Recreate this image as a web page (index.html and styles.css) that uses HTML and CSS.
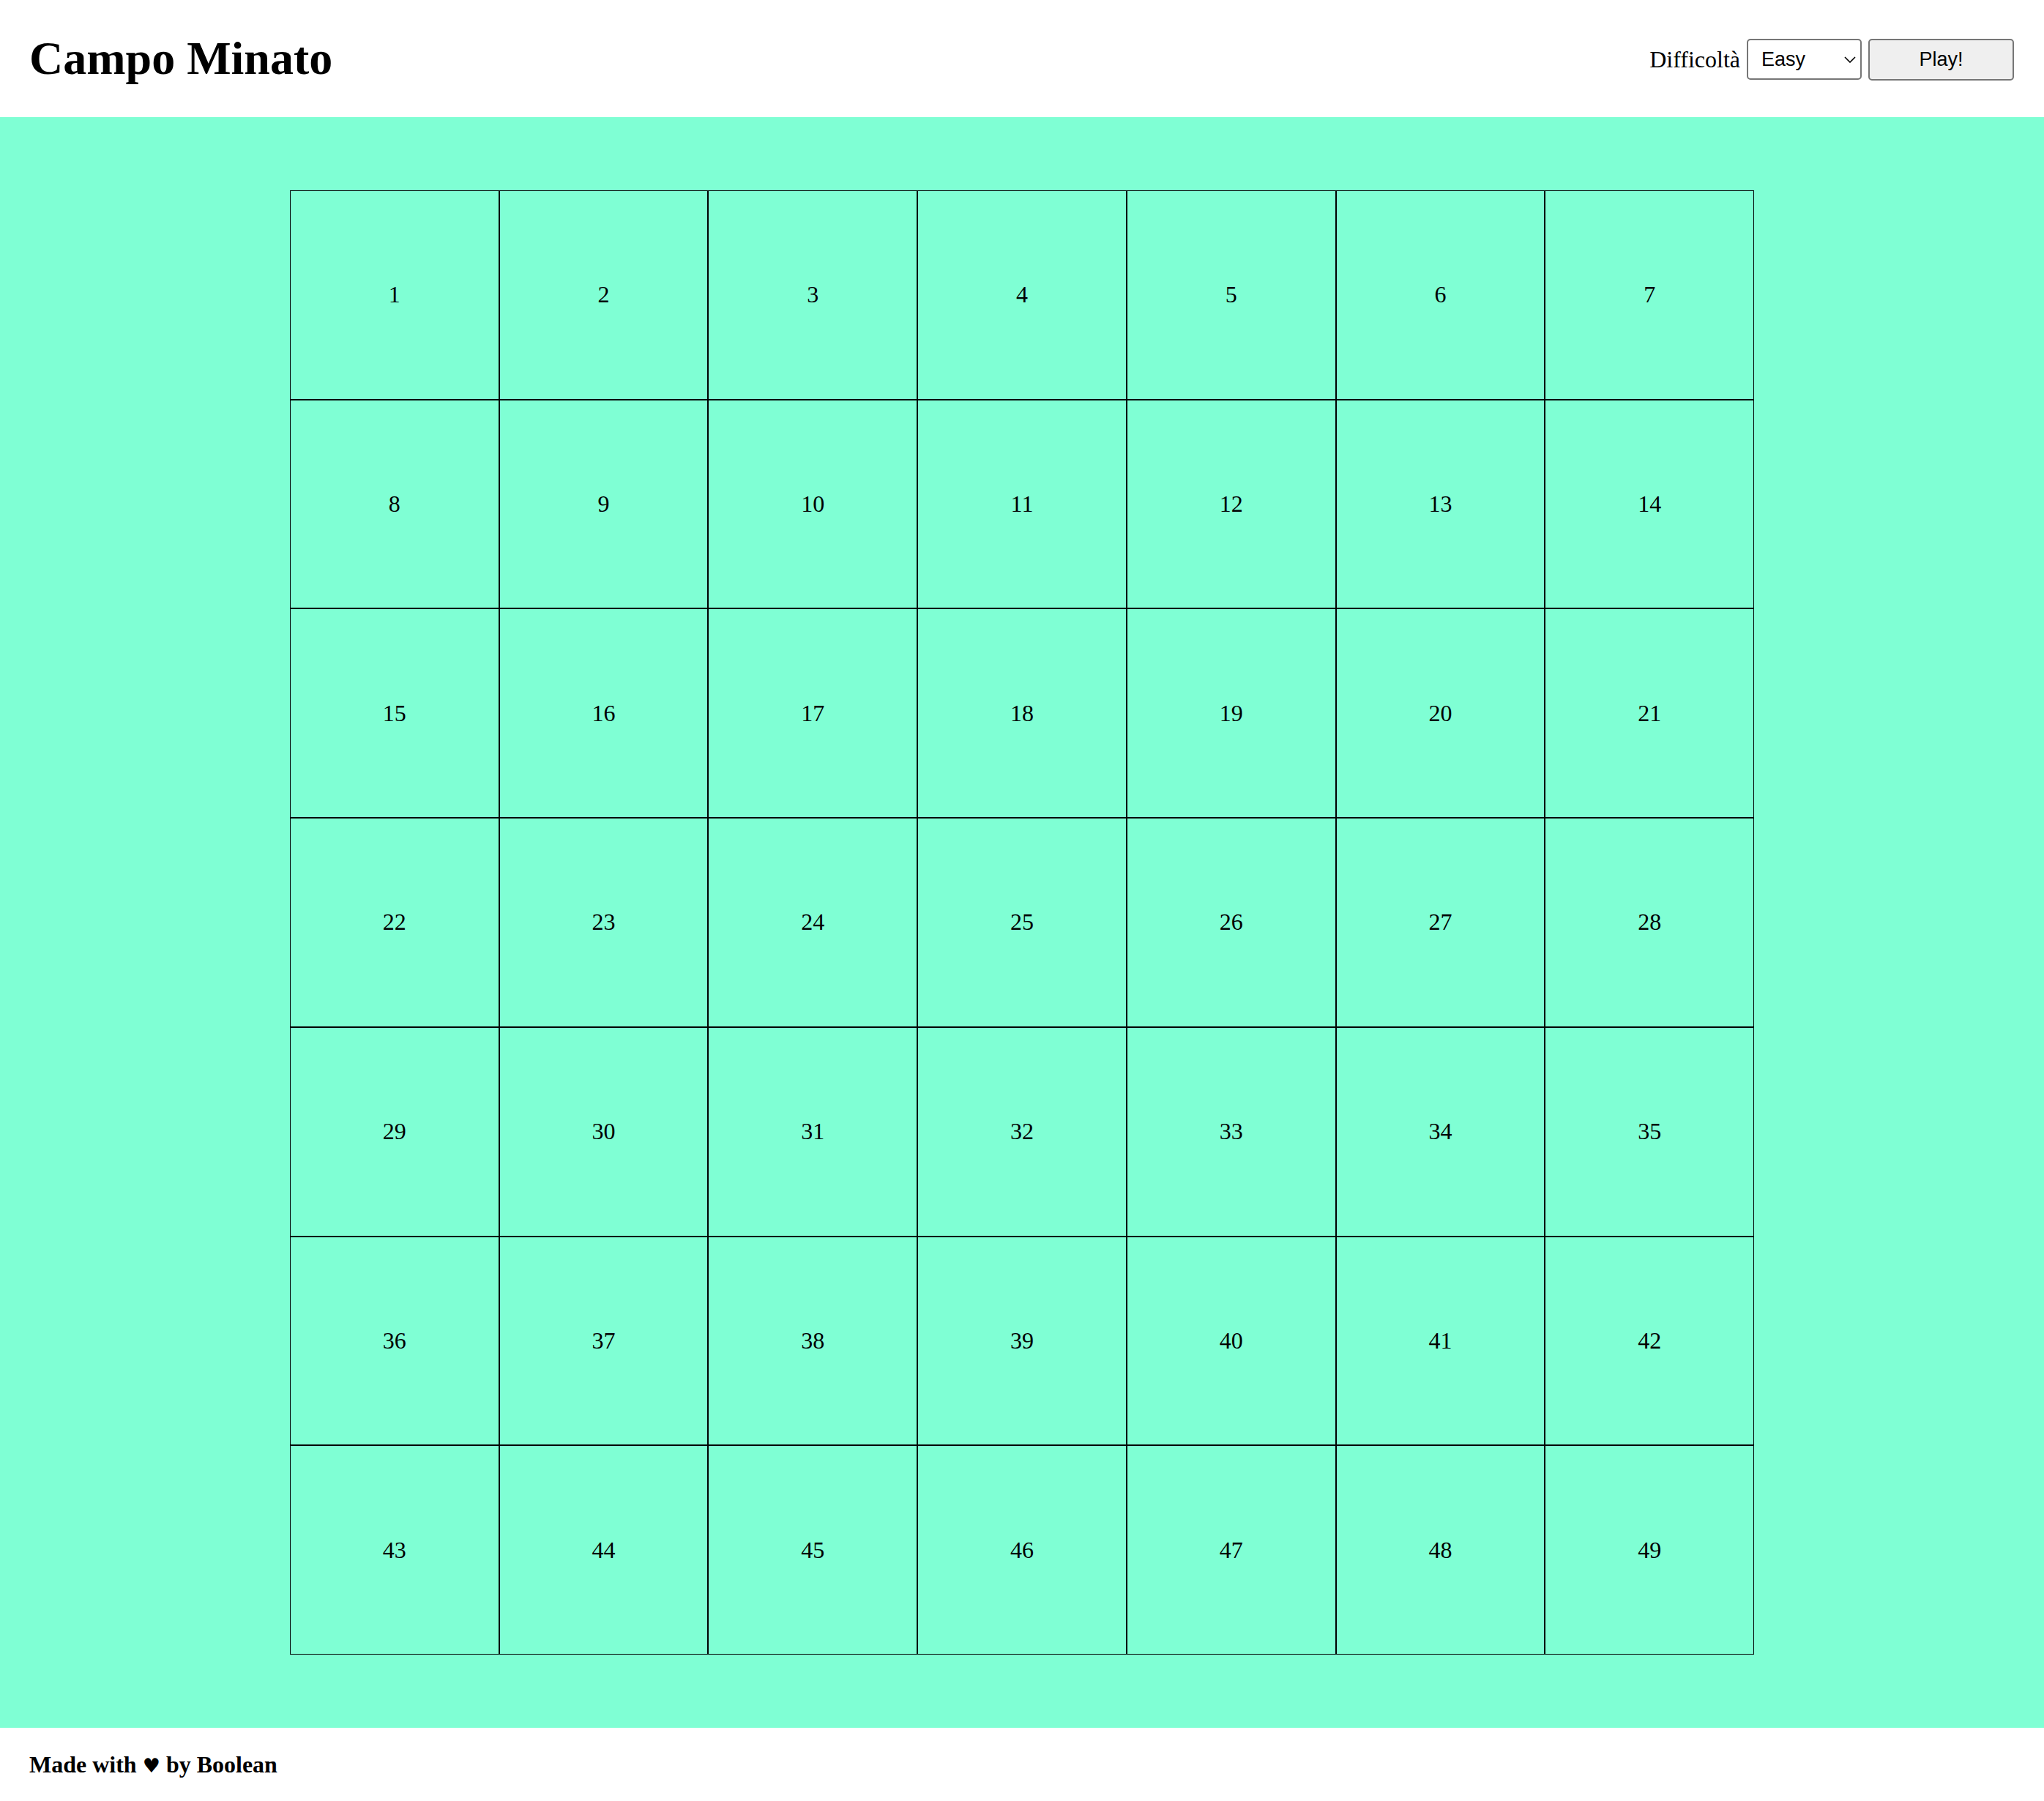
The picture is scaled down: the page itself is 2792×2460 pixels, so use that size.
FILE: index.html
```html
<!DOCTYPE html>
<html lang="it">
<head>
<meta charset="utf-8">
<title>Campo Minato</title>
<link rel="stylesheet" href="styles.css">
</head>
<body>
<header class="site-header">
  <h1 class="title">Campo Minato</h1>
  <div class="controls">
    <label class="label" for="difficulty">Difficoltà</label>
    <span class="select-wrap">
      <select id="difficulty" class="select">
        <option>Easy</option>
        <option>Medium</option>
        <option>Hard</option>
      </select>
      <svg class="chevron" width="16" height="9" viewBox="0 0 16 9" aria-hidden="true"><path d="M1 1 L8 8 L15 1" fill="none" stroke="#000" stroke-width="1.6"/></svg>
    </span>
    <button class="play">Play!</button>
  </div>
</header>
<main class="main">
  <div class="grid">
    <div class="cell">1</div><div class="cell">2</div><div class="cell">3</div><div class="cell">4</div><div class="cell">5</div><div class="cell">6</div><div class="cell">7</div>
    <div class="cell">8</div><div class="cell">9</div><div class="cell">10</div><div class="cell">11</div><div class="cell">12</div><div class="cell">13</div><div class="cell">14</div>
    <div class="cell">15</div><div class="cell">16</div><div class="cell">17</div><div class="cell">18</div><div class="cell">19</div><div class="cell">20</div><div class="cell">21</div>
    <div class="cell">22</div><div class="cell">23</div><div class="cell">24</div><div class="cell">25</div><div class="cell">26</div><div class="cell">27</div><div class="cell">28</div>
    <div class="cell">29</div><div class="cell">30</div><div class="cell">31</div><div class="cell">32</div><div class="cell">33</div><div class="cell">34</div><div class="cell">35</div>
    <div class="cell">36</div><div class="cell">37</div><div class="cell">38</div><div class="cell">39</div><div class="cell">40</div><div class="cell">41</div><div class="cell">42</div>
    <div class="cell">43</div><div class="cell">44</div><div class="cell">45</div><div class="cell">46</div><div class="cell">47</div><div class="cell">48</div><div class="cell">49</div>
  </div>
</main>
<footer class="site-footer">
  <p class="credits">Made with <span class="heart">♥</span> by Boolean</p>
</footer>
</body>
</html>
```

FILE: styles.css
```css
* {
  box-sizing: border-box;
}

html, body {
  margin: 0;
  padding: 0;
}

body {
  font-family: "Liberation Serif", "Times New Roman", serif;
  font-size: 32px;
  color: #000;
  background: #fff;
}

.site-header {
  height: 160px;
  padding: 0 41px 0 40px;
  display: flex;
  align-items: center;
  justify-content: space-between;
}

.title {
  margin: 0;
  font-size: 64px;
  font-weight: bold;
}

.controls {
  display: flex;
  align-items: center;
  gap: 9px;
  margin-top: 2px;
}

.label {
  font-size: 32px;
}

.select-wrap {
  position: relative;
  display: block;
  width: 157px;
  height: 56px;
}

.select {
  -webkit-appearance: none;
  appearance: none;
  width: 157px;
  height: 56px;
  font-family: "Liberation Sans", Arial, sans-serif;
  font-size: 27px;
  padding: 0 30px 0 18px;
  border: 2px solid #767676;
  border-radius: 5px;
  background: #fff;
  color: #000;
}

.chevron {
  position: absolute;
  right: 8px;
  top: 24px;
  pointer-events: none;
}

.play {
  width: 199px;
  height: 57px;
  font-family: "Liberation Sans", Arial, sans-serif;
  font-size: 27px;
  border: 2px solid #767676;
  border-radius: 5px;
  background: #efefef;
  color: #000;
  padding: 0;
}

.main {
  background: #7fffd4;
  padding: 100px 0;
  display: flex;
  justify-content: center;
}

.grid {
  width: 2000px;
  height: 2000px;
  display: grid;
  grid-template-columns: repeat(7, 1fr);
  grid-template-rows: repeat(7, 1fr);
}

.cell {
  border: 1px solid #000;
  display: flex;
  align-items: center;
  justify-content: center;
  font-size: 32px;
}

.site-footer {
  height: 100px;
  padding: 0 40px;
  display: flex;
  align-items: center;
}

.credits {
  margin: 0;
  font-weight: bold;
  font-size: 32px;
}

.heart {
  font-family: "DejaVu Sans", sans-serif;
  font-size: 27px;
}
```
